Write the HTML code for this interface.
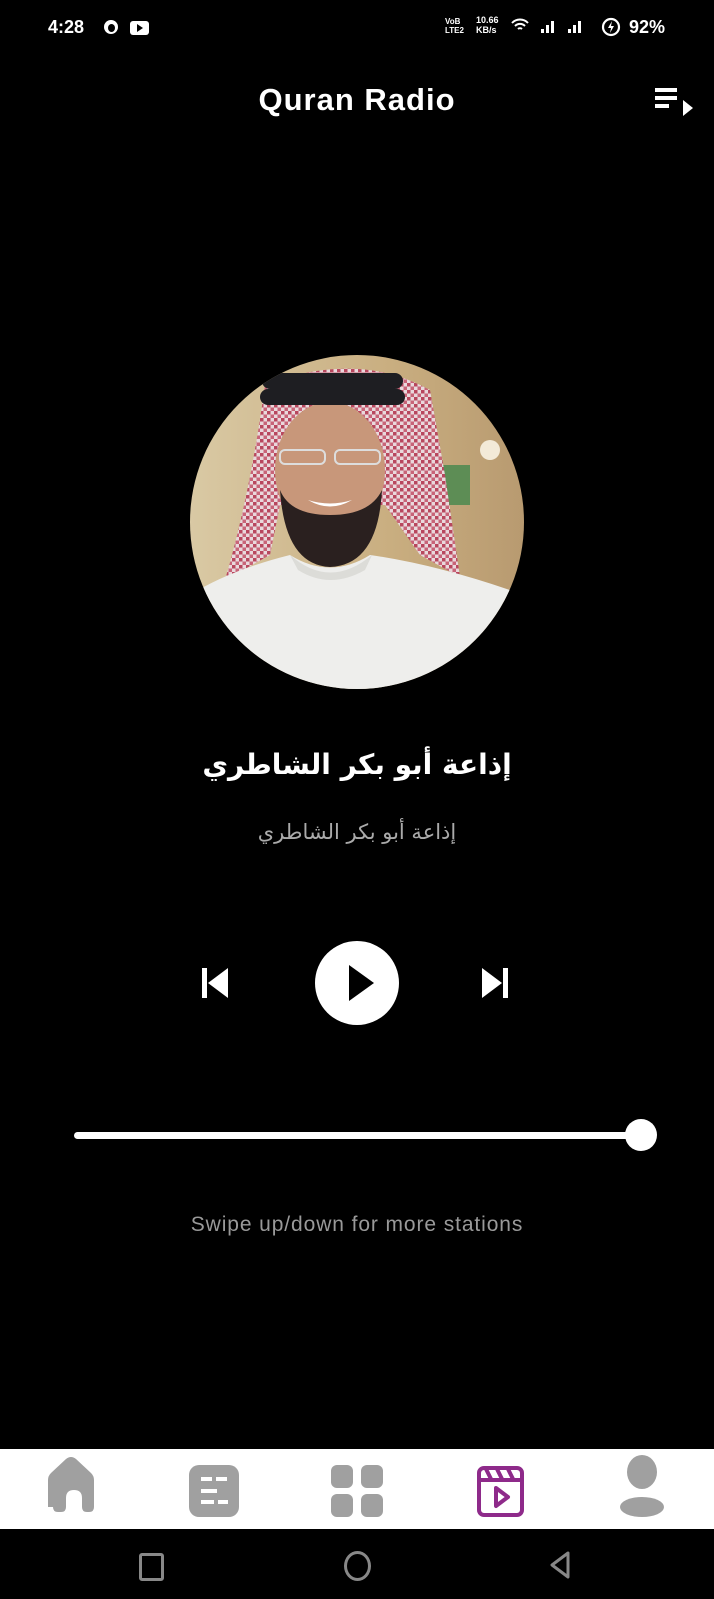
<!DOCTYPE html>
<html><head><meta charset="utf-8"><style>
html,body{margin:0;padding:0;background:#000;width:714px;height:1599px;overflow:hidden;font-family:"Liberation Sans","Noto Sans CJK SC",sans-serif;color:#fff}
.abs{position:absolute}
</style></head><body>
<div class="abs" style="left:48px;top:17px;font-size:18px;font-weight:bold">4:28</div>
<div class="abs" style="left:104px;top:20px;width:14px;height:14px;border-radius:50%;background:#fff"></div>
<div class="abs" style="left:108px;top:24px;width:7px;height:8px;border-radius:50%;background:#000"></div>
<div class="abs" style="left:130px;top:21px;width:19px;height:14px;border-radius:3px;background:#fff"></div>
<div class="abs" style="left:137px;top:24px;width:0;height:0;border-left:6px solid #000;border-top:4px solid transparent;border-bottom:4px solid transparent"></div>
<div class="abs" style="left:445px;top:17px;font-size:8px;line-height:9px;font-weight:bold">VoB<br>LTE2</div>
<div class="abs" style="left:476px;top:15px;font-size:9px;line-height:10px;font-weight:bold">10.66<br>KB/s</div>
<svg class="abs" style="left:510px;top:16px" width="20" height="20" viewBox="0 0 20 20" fill="none" stroke="#fff" stroke-width="2"><path d="M2 7a11 11 0 0 1 16 0M5 10a7 7 0 0 1 10 0M8 13a3 3 0 0 1 4 0"/></svg>
<svg class="abs" style="left:540px;top:17px" width="60" height="18"><g fill="#fff"><rect x="1" y="12" width="3" height="4"/><rect x="6" y="8" width="3" height="8"/><rect x="11" y="4" width="3" height="12"/><rect x="28" y="12" width="3" height="4"/><rect x="33" y="8" width="3" height="8"/><rect x="38" y="4" width="3" height="12"/></g></svg>
<svg class="abs" style="left:601px;top:17px" width="20" height="20"><circle cx="10" cy="10" r="8" fill="none" stroke="#fff" stroke-width="2.2"/><path d="M11 4l-4 7h3l-1 5 4-7h-3z" fill="#fff"/></svg>
<div class="abs" style="left:629px;top:17px;font-size:18px;font-weight:bold">92%</div>

<div class="abs" style="left:0;width:714px;top:82px;text-align:center;font-size:31px;font-weight:bold;letter-spacing:1px">Quran Radio</div>
<svg class="abs" style="left:652px;top:86px" width="44" height="36"><g fill="#fff"><rect x="3" y="2" width="22" height="4"/><rect x="3" y="10" width="22" height="4"/><rect x="3" y="18" width="14" height="4"/><path d="M31 14l10 8-10 8z"/></g></svg>

<svg class="abs" style="left:190px;top:355px" width="334" height="334" viewBox="0 0 334 334">
<defs><clipPath id="c"><circle cx="167" cy="167" r="167"/></clipPath>
<pattern id="p" width="7" height="7" patternUnits="userSpaceOnUse"><rect width="7" height="7" fill="#e9d8dc"/><rect width="3.5" height="3.5" fill="#b8475e"/><rect x="3.5" y="3.5" width="3.5" height="3.5" fill="#c86478"/></pattern>
<linearGradient id="bg" x1="0" x2="1"><stop offset="0" stop-color="#d9c9a4"/><stop offset="0.6" stop-color="#c9ae80"/><stop offset="1" stop-color="#b89a70"/></linearGradient></defs>
<g clip-path="url(#c)">
<rect width="334" height="334" fill="url(#bg)"/>
<rect x="250" y="110" width="30" height="40" fill="#5d8d55"/>
<circle cx="300" cy="95" r="10" fill="#f3ead8"/>
<path d="M75 30 Q167 -5 240 35 L255 120 L270 222 L230 200 L195 150 L90 150 L80 200 L35 225 Q60 140 75 30z" fill="url(#p)"/>
<ellipse cx="140" cy="115" rx="55" ry="68" fill="#c8977a"/>
<path d="M90 135 Q95 210 140 212 Q188 210 192 135 Q180 160 140 160 Q100 160 90 135z" fill="#2a201f"/>
<path d="M118 145 Q140 158 162 145 Q140 152 118 145z" fill="#fff"/>
<rect x="90" y="95" width="45" height="14" rx="5" fill="none" stroke="#ddd" stroke-width="2"/>
<rect x="145" y="95" width="45" height="14" rx="5" fill="none" stroke="#ddd" stroke-width="2"/>
<path d="M0 334 L0 240 Q40 215 100 200 Q140 225 180 200 Q250 210 334 240 L334 334z" fill="#eeeeec"/>
<path d="M100 200 Q140 235 182 200 L175 215 Q140 235 108 215z" fill="#dcdcd8"/>
<rect x="72" y="18" width="141" height="16" rx="8" fill="#1e1e22"/>
<rect x="70" y="34" width="145" height="16" rx="8" fill="#1e1e22"/>
</g></svg>

<div class="abs" style="left:0;width:714px;top:748px;text-align:center;font-size:28px;font-weight:bold;font-family:'DejaVu Sans',sans-serif" dir="rtl">إذاعة أبو بكر الشاطري</div>
<div class="abs" style="left:0;width:714px;top:820px;text-align:center;font-size:21px;color:#aaa;font-family:'DejaVu Sans',sans-serif" dir="rtl">إذاعة أبو بكر الشاطري</div>

<svg class="abs" style="left:196px;top:965px" width="40" height="36"><rect x="6" y="3" width="5" height="30" fill="#fff"/><path d="M12 18L32 3v30z" fill="#fff"/></svg>
<div class="abs" style="left:315px;top:941px;width:84px;height:84px;border-radius:50%;background:#fff"></div>
<div class="abs" style="left:349px;top:965px;width:0;height:0;border-left:25px solid #000;border-top:18px solid transparent;border-bottom:18px solid transparent"></div>
<svg class="abs" style="left:480px;top:965px" width="40" height="36"><path d="M2 3l20 15-20 15z" fill="#fff"/><rect x="23" y="3" width="5" height="30" fill="#fff"/></svg>

<div class="abs" style="left:74px;top:1132px;width:566px;height:7px;border-radius:4px;background:#fff"></div>
<div class="abs" style="left:625px;top:1119px;width:32px;height:32px;border-radius:50%;background:#fff"></div>

<div class="abs" style="left:0;width:714px;top:1213px;text-align:center;font-size:21px;color:#999;letter-spacing:0.9px">Swipe up/down for more stations</div>

<div class="abs" style="left:0;top:1449px;width:714px;height:80px;background:#fff"></div>
<svg class="abs" style="left:0;top:1449px" width="714" height="80">
<path d="M48 58V31q0-4 3-7l15-14q5-4 10 0l15 14q3 3 3 7v27q0 5-5 5h-2q-5 0-5-5v-9q0-8-8-8t-8 8v9q0 5-5 5h-3q-5 0-5-5z" fill="#a0a0a0"/>
<rect x="189" y="16" width="50" height="52" rx="10" fill="#a0a0a0"/>
<g fill="#fff"><rect x="201" y="28" width="11" height="4"/><rect x="216" y="28" width="11" height="4"/><rect x="201" y="40" width="16" height="4"/><rect x="201" y="51" width="13" height="4"/><rect x="218" y="51" width="10" height="4"/></g>
<rect x="331" y="16" width="22" height="23" rx="6" fill="#a0a0a0"/><rect x="361" y="16" width="22" height="23" rx="6" fill="#a0a0a0"/>
<rect x="331" y="45" width="22" height="23" rx="6" fill="#a0a0a0"/><rect x="361" y="45" width="22" height="23" rx="6" fill="#a0a0a0"/>
<rect x="479" y="19" width="43" height="47" rx="5" fill="none" stroke="#8e2a8a" stroke-width="4"/>
<path d="M479 31h43M486 20l5 10M497 20l5 10M508 20l5 10" stroke="#8e2a8a" stroke-width="4" fill="none"/>
<path d="M496 39l12 9-12 9z" fill="none" stroke="#8e2a8a" stroke-width="4" stroke-linejoin="round"/>
<ellipse cx="642" cy="23" rx="15" ry="17" fill="#a0a0a0"/>
<ellipse cx="642" cy="58" rx="22" ry="10" fill="#a0a0a0"/>
</svg>
<div class="abs" style="left:139px;top:1553px;width:19px;height:22px;border:3px solid #888;border-radius:3px"></div>
<div class="abs" style="left:344px;top:1551px;width:21px;height:24px;border:3px solid #888;border-radius:50%"></div>
<svg class="abs" style="left:548px;top:1550px" width="26" height="30"><path d="M20 3L4 15l16 12z" fill="none" stroke="#888" stroke-width="3" stroke-linejoin="round"/></svg>
</body></html>
